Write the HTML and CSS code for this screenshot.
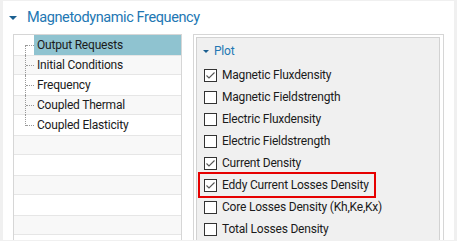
FILE: index.html
```html
<!DOCTYPE html>
<html lang="en">
<head>
    <meta charset="UTF-8">
    <meta name="viewport" content="width=device-width, initial-scale=1.0">
    <title>Magnetodynamic Frequency</title>
    <link rel="stylesheet" href="styles.css">
</head>
<body>
    <div class="window">
        <div class="section-head"><span class="caret"></span>Magnetodynamic Frequency</div>
        <div class="section-body">

            <!-- Step tree -->
            <div class="tree">
                <div class="row"><span class="twig first"><span></span></span><span class="label selected">Output Requests</span></div>
                <div class="row"><span class="twig"><span></span></span><span class="label">Initial Conditions</span></div>
                <div class="row"><span class="twig"><span></span></span><span class="label">Frequency</span></div>
                <div class="row"><span class="twig"><span></span></span><span class="label">Coupled Thermal</span></div>
                <div class="row"><span class="twig last"><span></span></span><span class="label">Coupled Elasticity</span></div>
                <div class="row"></div>
                <div class="row"></div>
                <div class="row"></div>
                <div class="row"></div>
                <div class="row"></div>
                <div class="row"></div>
            </div>

            <!-- Properties -->
            <div class="props">
                <div class="group">
                    <div class="group-head"><span class="caret small"></span>Plot</div>
                    <label class="check"><span class="box on"></span>Magnetic Fluxdensity</label>
                    <label class="check"><span class="box"></span>Magnetic Fieldstrength</label>
                    <label class="check"><span class="box"></span>Electric Fluxdensity</label>
                    <label class="check"><span class="box"></span>Electric Fieldstrength</label>
                    <label class="check"><span class="box on"></span>Current Density</label>
                    <label class="check marked"><span class="box on"></span>Eddy Current Losses Density</label>
                    <label class="check"><span class="box"></span>Core Losses Density (Kh,Ke,Kx)</label>
                    <label class="check"><span class="box"></span>Total Losses Density</label>
                </div>
            </div>

        </div>
    </div>
</body>
</html>
```

FILE: styles.css
```css
body {
    margin: 0;
    background: #f0f0f0;
    font-family: Roboto, "Noto Sans", sans-serif;
    font-size: 12px;
    letter-spacing: -0.2px;
    color: #1b1b1b;
}

.window {
    margin: 1px 3px 0 3px;
    height: 239px;
    background: #ffffff;
    overflow: hidden;
}

.section-head {
    height: 33px;
    display: flex;
    align-items: center;
    padding-left: 6px;
    font-size: 14.5px;
    letter-spacing: -0.4px;
    color: #2277b3;
}

.caret {
    width: 0;
    height: 0;
    border-left: 4px solid transparent;
    border-right: 4px solid transparent;
    border-top: 4px solid #1b5f90;
    margin-right: 10px;
}

.caret.small {
    border-left-width: 3px;
    border-right-width: 3px;
    border-top-width: 3px;
    margin-right: 5px;
}

.section-body {
    display: flex;
    gap: 11px;
    padding-left: 10px;
}

/* tree */

.tree {
    width: 167px;
    height: 210px;
    border: 1px solid #d6d6d6;
    border-bottom: none;
}

.row {
    display: flex;
    height: 20px;
}

.row:nth-child(even) {
    background: #f8f8f8;
    box-shadow: inset 0 1px #e6e6e6, inset 0 -1px #e6e6e6;
}

.twig {
    margin-left: 11px;
    width: 8px;
    border-left: 1px dotted #9a9a9a;
}

.twig span {
    display: block;
    margin-top: 10px;
    border-top: 1px dotted #9a9a9a;
}

.twig.first {
    margin-top: 10px;
}

.twig.first span {
    margin-top: 0;
}

.twig.last {
    align-self: flex-start;
    height: 11px;
}

.label {
    flex: 1;
    padding-left: 3px;
    line-height: 20px;
    white-space: nowrap;
}

.label.selected {
    background: #8fc3d0;
}

/* properties */

.props {
    width: 244px;
    height: 210px;
    border: 1px solid #d6d6d6;
    border-bottom: none;
    padding: 2px 3px 0 2px;
}

.group {
    height: 220px;
    background: #f0f0f0;
    border: 1px solid #d2d2d2;
    padding-left: 3px;
}

.group-head {
    height: 24px;
    padding-top: 2px;
    box-sizing: border-box;
    display: flex;
    align-items: center;
    padding-left: 3px;
    margin-bottom: 2px;
    color: #2277b3;
}

.check {
    display: flex;
    align-items: center;
    width: fit-content;
    height: 22px;
    padding: 0 5px 0 4px;
    white-space: nowrap;
}

.check.marked {
    outline: 2px solid #e60000;
}

.box {
    width: 11px;
    height: 11px;
    border: 1px solid #333333;
    background: #ffffff;
    margin-right: 5px;
    flex: none;
}

.box.on {
    background: #ffffff url("data:image/svg+xml;utf8,<svg xmlns='http://www.w3.org/2000/svg' width='11' height='11'><path d='M1.5 5.5 L4 8 L9.5 2.5' fill='none' stroke='%23555' stroke-width='1.1'/></svg>") no-repeat;
}
```
